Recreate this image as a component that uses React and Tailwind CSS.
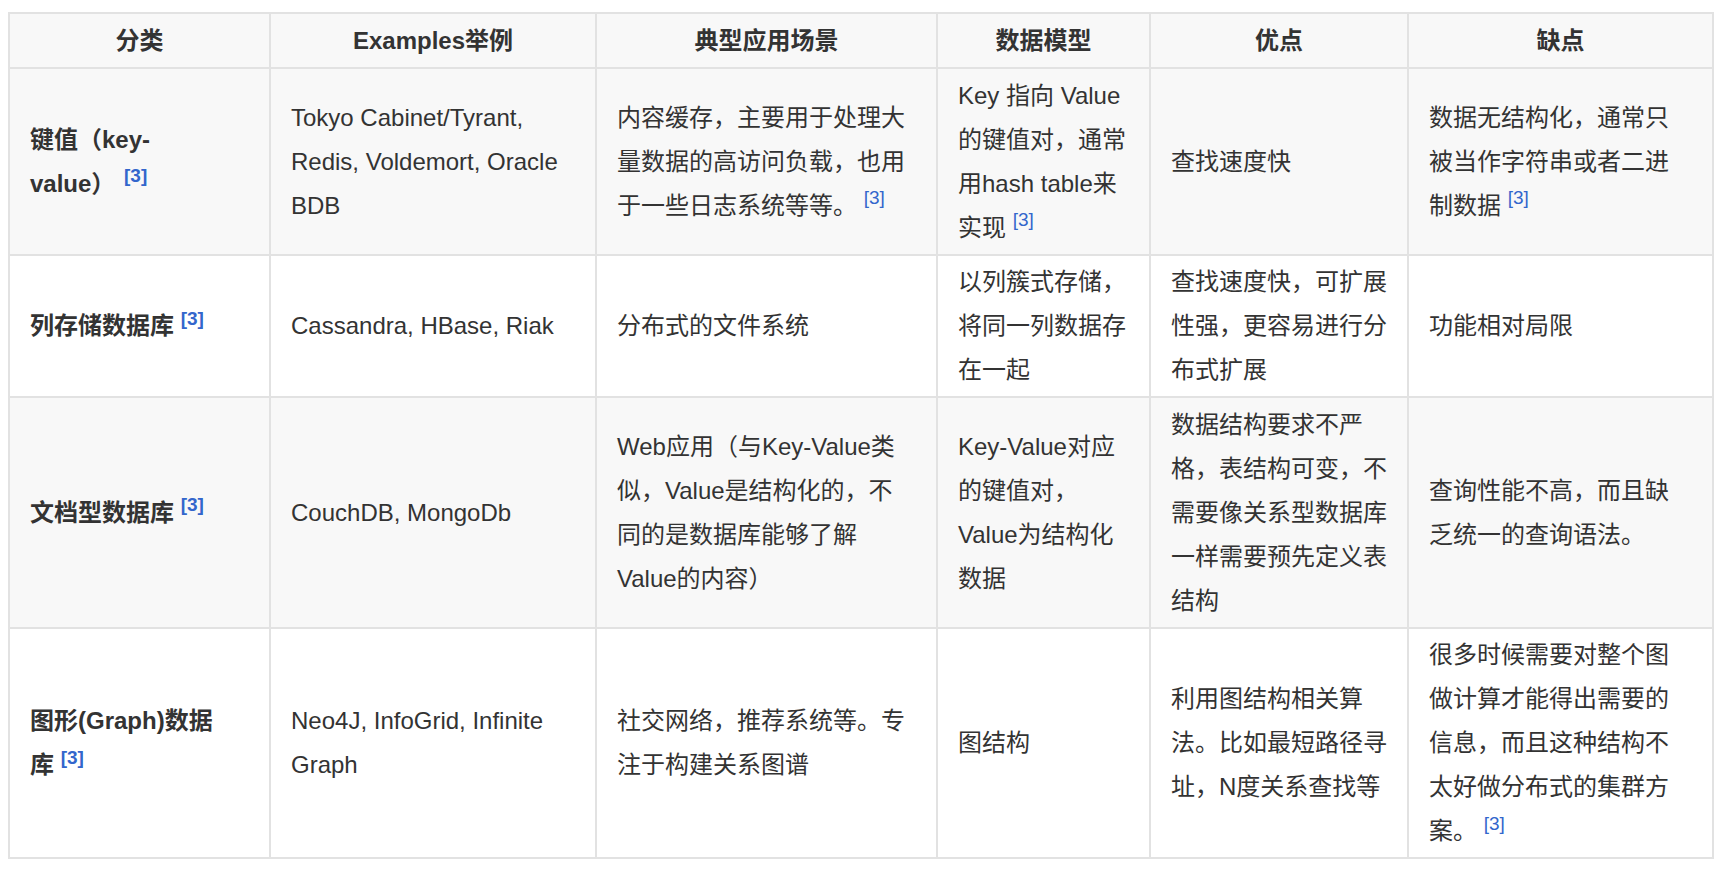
import React from "react";

const Ref = ({ bold }) => (
  <sup className={`text-[19px] text-[#3366cc] ${bold ? "font-bold" : "font-normal"}`}>[3]</sup>
);

const headers = ["分类", "Examples举例", "典型应用场景", "数据模型", "优点", "缺点"];
const widths = ["w-[261px]", "w-[326px]", "w-[341px]", "w-[213px]", "w-[258px]", "w-[305px]"];

const rows = [
  {
    h: "h-[187px]",
    gray: true,
    cells: [
      <>键值（key-<br />value）&nbsp;<span className="ml-[2px]" /><Ref bold /></>,
      <>Tokyo Cabinet/Tyrant,<br />Redis, Voldemort, Oracle<br />BDB</>,
      <>内容缓存，主要用于处理大<br />量数据的高访问负载，也用<br />于一些日志系统等等。 <Ref /></>,
      <>Key 指向 Value<br />的键值对，通常<br />用hash table来<br />实现 <Ref /></>,
      <>查找速度快</>,
      <>数据无结构化，通常只<br />被当作字符串或者二进<br />制数据 <Ref /></>,
    ],
  },
  {
    h: "h-[140px]",
    gray: false,
    cells: [
      <>列存储数据库 <Ref bold /></>,
      <>Cassandra, HBase, Riak</>,
      <>分布式的文件系统</>,
      <>以列簇式存储，<br />将同一列数据存<br />在一起</>,
      <>查找速度快，可扩展<br />性强，更容易进行分<br />布式扩展</>,
      <>功能相对局限</>,
    ],
  },
  {
    h: "h-[231px]",
    gray: true,
    cells: [
      <>文档型数据库 <Ref bold /></>,
      <>CouchDB, MongoDb</>,
      <>Web应用（与Key-Value类<br />似，Value是结构化的，不<br />同的是数据库能够了解<br />Value的内容）</>,
      <>Key-Value对应<br />的键值对，<br />Value为结构化<br />数据</>,
      <>数据结构要求不严<br />格，表结构可变，不<br />需要像关系型数据库<br />一样需要预先定义表<br />结构</>,
      <>查询性能不高，而且缺<br />乏统一的查询语法。</>,
    ],
  },
  {
    h: "h-[230px]",
    gray: false,
    cells: [
      <>图形(Graph)数据<br />库 <Ref bold /></>,
      <>Neo4J, InfoGrid, Infinite<br />Graph</>,
      <>社交网络，推荐系统等。专<br />注于构建关系图谱</>,
      <>图结构</>,
      <>利用图结构相关算<br />法。比如最短路径寻<br />址，N度关系查找等</>,
      <>很多时候需要对整个图<br />做计算才能得出需要的<br />信息，而且这种结构不<br />太好做分布式的集群方<br />案。 <Ref /></>,
    ],
  },
];

export default function App() {
  return (
    <div
      className="min-h-[871px] bg-white pt-[12px] pl-[8px] text-[#333] text-[24px] leading-[44px]"
      style={{ fontFamily: '"Liberation Sans", "Noto Sans CJK SC", sans-serif' }}
    >
      <table className="table-fixed border-collapse w-[1704px] border-2 border-[#e2e2e2]">
        <colgroup>
          {widths.map((w, i) => (
            <col key={i} className={w} />
          ))}
        </colgroup>
        <thead>
          <tr className="h-[55px] bg-[#f8f8f8]">
            {headers.map((t, i) => (
              <th
                key={i}
                className="border-2 border-[#e2e2e2] px-5 py-1 text-center font-bold align-middle whitespace-nowrap"
              >
                {t}
              </th>
            ))}
          </tr>
        </thead>
        <tbody>
          {rows.map((r, ri) => (
            <tr key={ri} className={`${r.h} ${r.gray ? "bg-[#f8f8f8]" : "bg-white"}`}>
              {r.cells.map((c, ci) => (
                <td
                  key={ci}
                  className={`border-2 border-[#e2e2e2] px-5 py-1 align-middle text-left whitespace-nowrap ${
                    ci === 0 ? "font-bold" : "font-normal"
                  }`}
                >
                  {c}
                </td>
              ))}
            </tr>
          ))}
        </tbody>
      </table>
    </div>
  );
}
